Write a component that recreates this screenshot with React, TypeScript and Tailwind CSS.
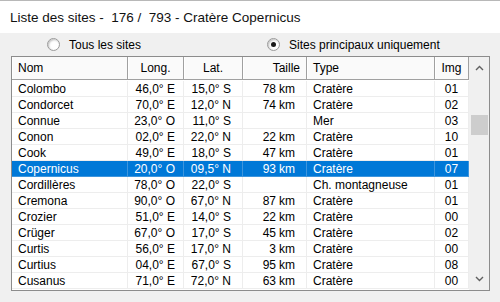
import React from "react";

type Row = [string, string, string, string, string, string];

const rows: Row[] = [
  ["Colombo", "46,0° E", "15,0° S", "78 km", "Cratère", "01"],
  ["Condorcet", "70,0° E", "12,0° N", "74 km", "Cratère", "02"],
  ["Connue", "23,0° O", "11,0° S", "", "Mer", "03"],
  ["Conon", "02,0° E", "22,0° N", "22 km", "Cratère", "10"],
  ["Cook", "49,0° E", "18,0° S", "47 km", "Cratère", "01"],
  ["Copernicus", "20,0° O", "09,5° N", "93 km", "Cratère", "07"],
  ["Cordillères", "78,0° O", "22,0° S", "", "Ch. montagneuse", "01"],
  ["Cremona", "90,0° O", "67,0° N", "87 km", "Cratère", "01"],
  ["Crozier", "51,0° E", "14,0° S", "22 km", "Cratère", "00"],
  ["Crüger", "67,0° O", "17,0° S", "45 km", "Cratère", "02"],
  ["Curtis", "56,0° E", "17,0° N", "3 km", "Cratère", "00"],
  ["Curtius", "04,0° E", "67,0° S", "95 km", "Cratère", "08"],
  ["Cusanus", "71,0° E", "72,0° N", "63 km", "Cratère", "00"],
];

const cols = "grid grid-cols-[116px_56px_59px_64px_128px_34px]";

function Radio({ checked, label }: { checked?: boolean; label: string }) {
  return (
    <div className="flex items-center gap-[9px]">
      <span className="w-[13px] h-[13px] rounded-full border border-[#9a9a9a] bg-white shadow-[inset_1px_1px_2px_rgba(0,0,0,0.25)] flex items-center justify-center">
        {checked && <span className="w-[5px] h-[5px] rounded-full bg-[#1a1a1a]" />}
      </span>
      <span>{label}</span>
    </div>
  );
}

function HeaderCell({ children, align }: { children: string; align: string }) {
  return (
    <div
      className={`h-[22px] flex items-center px-[6px] border-r border-[#a0a0a0] shadow-[inset_1px_0_0_#ffffff] ${align}`}
    >
      {children}
    </div>
  );
}

export default function App() {
  return (
    <div className="w-[500px] h-[302px] bg-[#f0f0f0] flex flex-col text-[12px] text-black font-['Liberation_Sans',Arial,sans-serif] overflow-hidden">
      <div className="h-[33px] bg-white border-t border-[#b8b8b8] flex items-center pl-[10px] pt-[2px] text-[13.5px] text-[#111] whitespace-pre">
        {"Liste des sites -  176 /  793 - Cratère Copernicus"}
      </div>
      <div className="h-[23px] flex items-center">
        <div className="w-[267px] pl-[47px]">
          <Radio label="Tous les sites" />
        </div>
        <Radio checked label="Sites principaux uniquement" />
      </div>
      <div className="ml-[11px] w-[479px] h-[235px] border border-[#8c8c8c] bg-white flex">
        <div className="flex-1 flex flex-col">
          <div className={`${cols} bg-[#fafafa] border-b border-[#a0a0a0]`}>
            <HeaderCell align="justify-start">Nom</HeaderCell>
            <HeaderCell align="justify-center">Long.</HeaderCell>
            <HeaderCell align="justify-center">Lat.</HeaderCell>
            <HeaderCell align="justify-end">Taille</HeaderCell>
            <HeaderCell align="justify-start">Type</HeaderCell>
            <HeaderCell align="justify-center">Img</HeaderCell>
          </div>
          <div className="pt-[1px]">
            {rows.map((r) => {
              const sel = r[0] === "Copernicus";
              const line = sel ? "border-[#3d95dd]" : "border-[#ededed]";
              const cell = `h-[16px] flex items-center px-[6px] border-r border-b ${line}`;
              return (
                <div
                  key={r[0]}
                  className={`${cols} ${sel ? "bg-[#0078d7] text-white" : ""}`}
                >
                  <div className={`${cell} justify-start`}>{r[0]}</div>
                  <div className={`${cell} justify-end pr-[8px]`}>{r[1]}</div>
                  <div className={`${cell} justify-end pr-[11px]`}>{r[2]}</div>
                  <div className={`${cell} justify-end pr-[11px] gap-[3px]`}>
                    {r[3] && (
                      <>
                        <span>{r[3].split(" ")[0]}</span>
                        <span>km</span>
                      </>
                    )}
                  </div>
                  <div className={`${cell} justify-start`}>{r[4]}</div>
                  <div className={`${cell} justify-center`}>{r[5]}</div>
                </div>
              );
            })}
          </div>
        </div>
        <div className="w-[20px] bg-[#f0f0f0] flex flex-col items-center">
          <div className="h-[22px] flex items-center justify-center">
            <svg width="9" height="6" viewBox="0 0 9 6">
              <path d="M1 5 L4.5 1.5 L8 5" fill="none" stroke="#606060" strokeWidth="1.4" />
            </svg>
          </div>
          <div className="h-[36px]" />
          <div className="w-[17px] h-[20px] bg-[#cdcdcd]" />
          <div className="flex-1" />
          <div className="h-[22px] flex items-center justify-center">
            <svg width="9" height="6" viewBox="0 0 9 6">
              <path d="M1 1 L4.5 4.5 L8 1" fill="none" stroke="#606060" strokeWidth="1.4" />
            </svg>
          </div>
        </div>
      </div>
    </div>
  );
}
